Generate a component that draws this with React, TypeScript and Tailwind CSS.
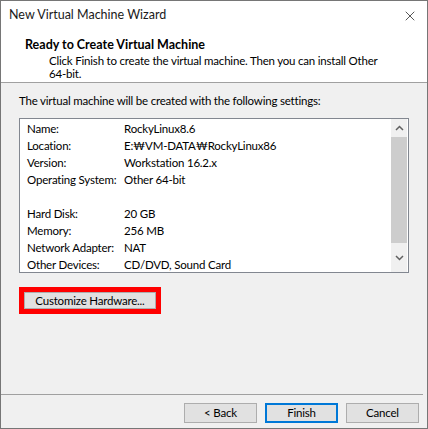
import { X } from "lucide-react";

const rows: [string, string][] = [
  ["Name:", "RockyLinux8.6"],
  ["Location:", "E:₩VM-DATA₩RockyLinux86"],
  ["Version:", "Workstation 16.2.x"],
  ["Operating System:", "Other 64-bit"],
  ["", ""],
  ["Hard Disk:", "20 GB"],
  ["Memory:", "256 MB"],
  ["Network Adapter:", "NAT"],
  ["Other Devices:", "CD/DVD, Sound Card"],
];

const font = { fontFamily: "Lato, 'Noto Sans CJK KR', sans-serif" };

const Chevron = ({ down }: { down?: boolean }) => (
  <svg width="9" height="6" viewBox="0 0 9 6" className="text-[#606060]">
    <path
      d={down ? "M1 1 L4.5 4.5 L8 1" : "M1 5 L4.5 1.5 L8 5"}
      fill="none"
      stroke="currentColor"
      strokeWidth="1.5"
    />
  </svg>
);

const WinButton = ({ label, primary }: { label: string; primary?: boolean }) => (
  <button
    className={
      "w-[73px] h-[20px] bg-[#e1e1e1] text-black flex items-center justify-center leading-none " +
      (primary ? "border-2 border-[#0078d7]" : "border border-[#adadad]")
    }
  >
    {label}
  </button>
);

export default function App() {
  return (
    <div
      className="w-[428px] h-[429px] border border-[#767676] bg-[#f0f0f0] flex flex-col text-[11.5px] tracking-[-0.2px] text-black overflow-hidden whitespace-nowrap"
      style={font}
    >
      {/* title bar */}
      <div className="h-[29px] bg-white flex items-center justify-between pl-[8px] pr-[9px]">
        <span className="text-[12.5px] tracking-normal text-[#1a1a1a]">New Virtual Machine Wizard</span>
        <X size={16} strokeWidth={1} className="text-black" />
      </div>

      {/* header */}
      <div className="h-[53px] bg-white border-b border-[#a0a0a0] flex flex-col pt-[8px] pl-[24px] leading-[13px]">
        <span className="font-bold text-[12.5px] tracking-normal">Ready to Create Virtual Machine</span>
        <div className="pl-[24px] pt-[3px] leading-[13px]">
          Click Finish to create the virtual machine. Then you can install Other
          <br />
          64-bit.
        </div>
      </div>

      {/* body */}
      <div className="flex-1 flex flex-col px-[18px] pt-[9px]">
        <div className="leading-[17px]">The virtual machine will be created with the following settings:</div>

        <div className="mt-[9px] h-[155px] border border-[#828790] bg-white flex overflow-hidden">
          <div className="flex-1 pt-[1px] pl-[7px]">
            {rows.map(([k, v], i) => (
              <div key={i} className="h-[17px] flex items-center leading-none">
                <span className="w-[97px] shrink-0">{k}</span>
                <span>{v}</span>
              </div>
            ))}
          </div>
          <div className="w-[16px] mr-[1px] bg-[#f0f0f0] flex flex-col">
            <div className="h-[18px] flex items-center justify-center">
              <Chevron />
            </div>
            <div className="h-[106px] bg-[#cdcdcd]" />
            <div className="flex-1 flex items-center justify-center">
              <Chevron down />
            </div>
          </div>
        </div>

        <div className="mt-[14px] w-[142px] h-[27px] bg-[#ff0000] p-[5px]">
          <button className="w-full h-full bg-[#e1e1e1] border border-[#adadad] flex items-center justify-center leading-none">
            Customize Hardware...
          </button>
        </div>
      </div>

      {/* footer */}
      <div className="h-[34px] border-t border-[#a0a0a0] mr-[4px] flex justify-end items-start pt-[8px] pr-[4px] gap-[8px]">
        <WinButton label="< Back" />
        <WinButton label="Finish" primary />
        <WinButton label="Cancel" />
      </div>
    </div>
  );
}
